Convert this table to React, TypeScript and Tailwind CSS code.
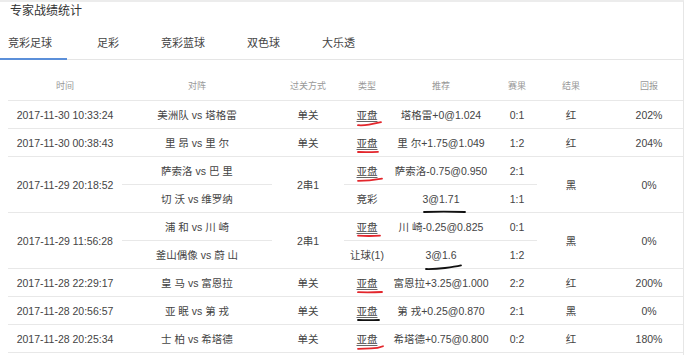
import React from "react";

type Scribble = { color: string; d: string; w: number; h?: number; dy?: number };

type Leg = {
  match: string;
  kind: string;
  pick: string;
  score: string;
  kindMark?: Scribble;
  pickMark?: Scribble;
};

type Row = { time: string; pass: string; legs: Leg[]; result: string; ret: string };

const RED = "#e3262c";
const INK = "#111111";

const rows: Row[] = [
  {
    time: "2017-11-30 10:33:24",
    pass: "单关",
    legs: [
      { match: "美洲队 vs 塔格雷", kind: "亚盘", pick: "塔格雷+0@1.024", score: "0:1", kindMark: { color: RED, d: "M1 4.2 Q6 4.6 12 3.6 T24 1.2", w: 26 } },
    ],
    result: "红",
    ret: "202%",
  },
  {
    time: "2017-11-30 00:38:43",
    pass: "单关",
    legs: [
      { match: "里 昂 vs 里 尔", kind: "亚盘", pick: "里 尔+1.75@1.049", score: "1:2", kindMark: { color: RED, d: "M1 3 Q11 3.4 21 2.8", w: 24 } },
    ],
    result: "红",
    ret: "204%",
  },
  {
    time: "2017-11-29 20:18:52",
    pass: "2串1",
    legs: [
      { match: "萨索洛 vs 巴 里", kind: "亚盘", pick: "萨索洛-0.75@0.950", score: "2:1", kindMark: { color: RED, d: "M1 3.8 Q12 3.8 25 1.6", w: 27 } },
      { match: "切 沃 vs 维罗纳", kind: "竞彩", pick: "3@1.71", score: "1:1", pickMark: { color: INK, d: "M1 3 Q20 2.2 42 3", w: 44, dy: 4 } },
    ],
    result: "黑",
    ret: "0%",
  },
  {
    time: "2017-11-29 11:56:28",
    pass: "2串1",
    legs: [
      { match: "浦 和 vs 川 崎", kind: "亚盘", pick: "川 崎-0.25@0.825", score: "0:1", kindMark: { color: RED, d: "M1 2.6 Q12 3.4 23 2.6", w: 25 } },
      { match: "釜山偶像 vs 蔚 山", kind: "让球(1)", pick: "3@1.6", score: "1:2", pickMark: { color: INK, d: "M1 5 Q10 5.2 20 4 T36 1.4", w: 38, h: 7, dy: 3 } },
    ],
    result: "黑",
    ret: "0%",
  },
  {
    time: "2017-11-28 22:29:17",
    pass: "单关",
    legs: [
      { match: "皇 马 vs 富恩拉", kind: "亚盘", pick: "富恩拉+3.25@1.000", score: "2:2", kindMark: { color: RED, d: "M1 3.2 Q13 3.6 25 3", w: 27 } },
    ],
    result: "红",
    ret: "200%",
  },
  {
    time: "2017-11-28 20:56:57",
    pass: "单关",
    legs: [
      { match: "亚 眠 vs 第 戎", kind: "亚盘", pick: "第 戎+0.25@0.870", score: "2:1", kindMark: { color: INK, d: "M1 3 Q11 3.4 22 3", w: 24 } },
    ],
    result: "黑",
    ret: "0%",
  },
  {
    time: "2017-11-28 20:25:34",
    pass: "单关",
    legs: [
      { match: "士 柏 vs 希塔德", kind: "亚盘", pick: "希塔德+0.75@0.800", score: "0:2", kindMark: { color: RED, d: "M1 3.8 Q7 3.4 14 3.4 T26 1.2", w: 28 } },
    ],
    result: "红",
    ret: "180%",
  },
];

const tabs = ["竞彩足球", "足彩", "竞彩蓝球", "双色球", "大乐透"];

function Mark({ m }: { m: Scribble }) {
  const h = m.h ?? 6;
  return (
    <svg
      className="absolute left-0 top-full pointer-events-none"
      style={{ marginTop: m.dy ?? 0 }}
      width={m.w}
      height={h}
      viewBox={`0 0 ${m.w} ${h}`}
    >
      <path d={m.d} fill="none" stroke={m.color} strokeWidth={1.8} strokeLinecap="round" />
    </svg>
  );
}

function Marked({ text, mark, link }: { text: string; mark?: Scribble; link?: boolean }) {
  return (
    <span className={"relative inline-block" + (link ? " underline underline-offset-2 decoration-[#666]" : "")}>
      {text}
      {mark && <Mark m={mark} />}
    </span>
  );
}

function Cell({ className, children }: { className: string; children?: React.ReactNode }) {
  return <div className={"flex items-center justify-center whitespace-nowrap " + className}>{children}</div>;
}

function TableRow({ row }: { row: Row }) {
  return (
    <div className="flex border-b border-[#e8e8e8]">
      <Cell className="w-[114px]">{row.time}</Cell>
      <div className="flex flex-col w-[150px]">
        {row.legs.map((leg, i) => (
          <Cell key={i} className={"h-[27px]" + (i < row.legs.length - 1 ? " h-[28px] border-b border-[#e8e8e8]" : "")}>
            {leg.match}
          </Cell>
        ))}
      </div>
      <Cell className="w-[72px]">{row.pass}</Cell>
      <div className="flex flex-col w-[193px]">
        {row.legs.map((leg, i) => (
          <div key={i} className={"flex h-[27px]" + (i < row.legs.length - 1 ? " h-[28px] border-b border-[#e8e8e8]" : "")}>
            <Cell className="w-[46px]">
              <Marked text={leg.kind} mark={leg.kindMark} link={leg.kind === "亚盘"} />
            </Cell>
            <Cell className="w-[102px]">
              <Marked text={leg.pick} mark={leg.pickMark} />
            </Cell>
            <Cell className="w-[45px] pl-[5px]">{leg.score}</Cell>
          </div>
        ))}
      </div>
      <Cell className="w-[68px]">{row.result}</Cell>
      <Cell className="w-[78px] pl-[10px]">{row.ret}</Cell>
    </div>
  );
}

export default function App() {
  return (
    <div className="w-[690px] h-[355px] overflow-hidden bg-white font-['Liberation_Sans','Noto_Sans_CJK_SC',sans-serif] text-[#444]">
      <div className="w-[684px] h-[355px] border-t-2 border-r border-t-[#ececec] border-r-[#e6e6e6]">
        <div className="h-[18px] pl-[10px] pt-[1px] text-[12px] leading-[16px] text-[#333]">专家战绩统计</div>

        <div className="flex items-start h-[40px] border-b border-[#e5e5e5] text-[11px] leading-[12px] text-[#444]">
          {tabs.map((t, i) =>
            i === 0 ? (
              <div key={t} className="h-[40px] -mb-px pl-2 pr-[15px] pt-[17px] border-b-2 border-[#5b8fd9]">
                {t}
              </div>
            ) : (
              <div key={t} className={"pt-[17px] " + (i === 1 ? "ml-[30px]" : "ml-[42px]")}>
                {t}
              </div>
            )
          )}
        </div>

        <div className="ml-2 w-[675px]">
          <div className="flex items-end h-[41px] pb-[8px] border-b border-[#e8e8e8] text-[9px] leading-[12px] text-[#999]">
            <div className="w-[114px] text-center">时间</div>
            <div className="w-[150px] text-center">对阵</div>
            <div className="w-[72px] text-center">过关方式</div>
            <div className="w-[46px] text-center">类型</div>
            <div className="w-[102px] text-center">推荐</div>
            <div className="w-[45px] pl-[5px] text-center">赛果</div>
            <div className="w-[68px] text-center">结果</div>
            <div className="w-[78px] pl-[10px] text-center">回报</div>
          </div>

          <div className="text-[10.5px] leading-[12px]">
            {rows.map((r) => (
              <TableRow key={r.time} row={r} />
            ))}
          </div>
        </div>
      </div>
    </div>
  );
}
